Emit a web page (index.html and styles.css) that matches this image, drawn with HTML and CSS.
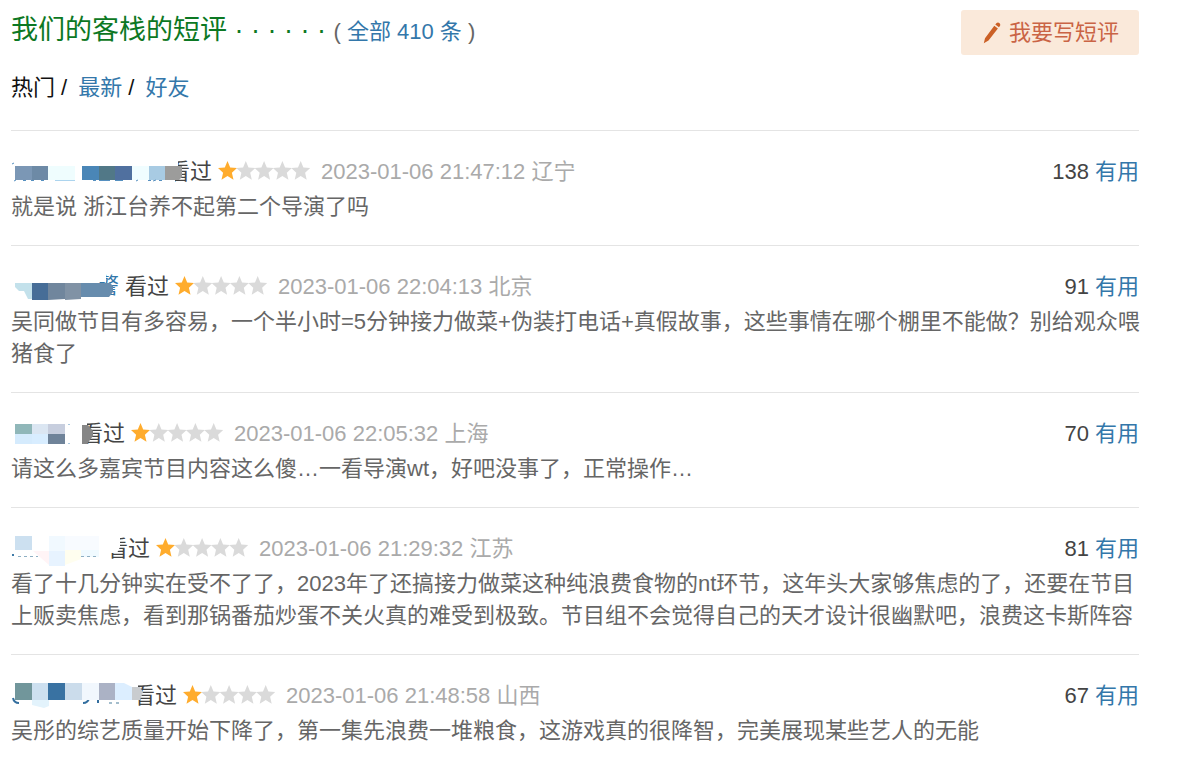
FILE: index.html
```html
<!DOCTYPE html>
<html lang="zh-CN">
<head>
<meta charset="utf-8">
<title>我们的客栈的短评</title>
<link rel="stylesheet" href="styles.css">
</head>
<body>
<svg class="defs" width="0" height="0" aria-hidden="true">
  <defs>
    <path id="star" d="M9.500 0L12.200 6.500L19 7.100L13.900 11.700L15.500 18.700L9.500 15.100L3.500 18.700L5.100 11.700L0 7.100L6.800 6.500Z"/>
    <g id="rating">
      <use href="#star" x="0" fill="#ffac2d"/>
      <g fill="#dadada"><use href="#star" x="18.300"/><use href="#star" x="36.600"/><use href="#star" x="54.900"/><use href="#star" x="73.200"/></g>
    </g>
  </defs>
</svg>
<main class="page">
  <header class="head">
    <h2 class="title">我们的客栈的短评 · · · · · · <span class="total">( <a href="#">全部 410 条</a> )</span></h2>
    <button class="write" type="button">
      <svg class="pencil" viewBox="0 0 18 22" width="18" height="22" aria-hidden="true"><path fill="#cb6026" d="M0.800 21.200L2 16.200L11.300 3.800L14.900 6.500L5.500 18.600ZM12.300 2.500L13.600 0.900Q15.200 0.100 16.600 1.200Q17.700 2.400 17.100 3.700L15.900 5.200Z"/></svg>
      <span>我要写短评</span>
    </button>
  </header>
  <nav class="tabs">
    <span class="tab">热门 /</span>
    <span class="tab"><a href="#">最新</a> /</span>
    <a class="tab" href="#">好友</a>
  </nav>

  <article class="comment">
    <div class="info">
      <span class="user user-a"><svg class="mask" width="180" height="34" aria-hidden="true">
        <path fill="#fff" d="M153 5h14v7h-14zM153 24h11v6h-11z"/>
        <path fill="#7b97b5" d="M4 11h17v14H4z"/><path fill="#6d8aa6" d="M21 11h16v14H21z"/><path fill="#effdfe" d="M37 11h27v14H37z"/>
        <path fill="#4a86b7" d="M71 11h17v14H71z"/><path fill="#517887" d="M88 11h16v14H88z"/><path fill="#50709f" d="M104 11h17v14h-17z"/>
        <path fill="#f0fdff" d="M121 11h17v14h-17z"/><path fill="#a8cbe3" d="M138 11h16v14h-16z"/><path fill="#9c9c9b" d="M154 11h17v11l-3 3h-14z"/>
        <path stroke="#5690c0" fill="none" d="M1 9l2-1M3 26l2-1M12 25.500h3M20 25.500h3M30 25.500h3M82 25.500h3M88 25.500h11M104 25.500h8M125 26l2-1M137 25.500h3M142 26l3-1M148 25.500h3"/><path stroke="#acd4ee" d="M44 25.500h20"/>
      </svg></span>
      <span class="seen">看过</span>
      <svg class="stars" width="93" height="19" role="img" aria-label="1星"><use href="#rating"/></svg>
      <span class="meta">2023-01-06 21:47:12 辽宁</span>
      <span class="vote">138 <a href="#">有用</a></span>
    </div>
    <p class="text">就是说 浙江台养不起第二个导演了吗</p>
  </article>

  <article class="comment">
    <div class="info">
      <span class="user user-b"><a class="name-end" href="#">警</a><svg class="mask" width="120" height="34" aria-hidden="true">
        <path fill="#fff" d="M82 3h13v9H82zM82 25h17v6H82z"/>
        <path fill="#c3e1eb" d="M4 13h17v16h-4l-4-8H8l-4-4z"/><path fill="#466d97" d="M21 13h16v17H21z"/><path fill="#70869d" d="M37 13h17v16l-17 1z"/>
        <path fill="#8092a5" d="M54 13h16v16l-16 1z"/><path fill="#678cad" d="M70 13h29l3 3v6l-4 5H70z"/>
      </svg></span>
      <span class="seen">看过</span>
      <svg class="stars" width="93" height="19" role="img" aria-label="1星"><use href="#rating"/></svg>
      <span class="meta">2023-01-06 22:04:13 北京</span>
      <span class="vote">91 <a href="#">有用</a></span>
    </div>
    <p class="text">吴同做节目有多容易，一个半小时=5分钟接力做菜+伪装打电话+真假故事，这些事情在哪个棚里不能做？别给观众喂猪食了</p>
  </article>

  <article class="comment">
    <div class="info">
      <span class="user user-c"><svg class="mask" width="90" height="34" aria-hidden="true">
        <path fill="#fff" d="M68 6h8v22h-8z"/>
        <path fill="#90b7b9" d="M4 7h17v10H4z"/><path fill="#dbe6f2" d="M21 7h16v10H21z"/><path fill="#c7cede" d="M37 7h17v10H37z"/>
        <path fill="#d5ebfd" d="M4 17h17v10H4z"/><path fill="#d8edff" d="M21 17h16v10H21z"/><path fill="#6f8399" d="M37 17h17v10H37z"/>
        <path fill="#868686" d="M71 8h6l5 6v5l-6 8h-5z"/><path fill="#a9c8df" d="M57 7h2v1h-2zM57 26h2v1h-2z"/>
      </svg></span>
      <span class="seen">看过</span>
      <svg class="stars" width="93" height="19" role="img" aria-label="1星"><use href="#rating"/></svg>
      <span class="meta">2023-01-06 22:05:32 上海</span>
      <span class="vote">70 <a href="#">有用</a></span>
    </div>
    <p class="text">请这么多嘉宾节目内容这么傻…一看导演wt，好吧没事了，正常操作…</p>
  </article>

  <article class="comment">
    <div class="info">
      <span class="user user-d"><svg class="mask" width="120" height="38" aria-hidden="true">
        <path fill="#fff" d="M94 4h15v11l-3 6h-6v7h-6z"/>
        <path fill="#cce0f0" d="M4 4h17v14H4z"/><path fill="#f1f9ff" d="M38 4h16v15H38z"/><path fill="#f8fbff" d="M54 4h34v14H54z"/>
        <path fill="#e7f3ff" d="M38 19h16v15H38z"/><path fill="#fff4f6" d="M22 19h16v14z"/><path fill="#fffeef" d="M54 18h16v9l-16 6z"/><path fill="#f0faff" d="M70 18h18v7H70z"/>
        <path stroke="#3f7ba8" stroke-width="2" d="M1 23h2"/><path stroke="#8eafc3" stroke-dasharray="3 3" d="M7 24.500h20M70 24.500h18"/>
      </svg></span>
      <span class="seen">看过</span>
      <svg class="stars" width="93" height="19" role="img" aria-label="1星"><use href="#rating"/></svg>
      <span class="meta">2023-01-06 21:29:32 江苏</span>
      <span class="vote">81 <a href="#">有用</a></span>
    </div>
    <p class="text">看了十几分钟实在受不了了，2023年了还搞接力做菜这种纯浪费食物的nt环节，这年头大家够焦虑的了，还要在节目上贩卖焦虑，看到那锅番茄炒蛋不关火真的难受到极致。节目组不会觉得自己的天才设计很幽默吧，浪费这卡斯阵容</p>
  </article>

  <article class="comment">
    <div class="info">
      <span class="user user-e"><svg class="mask" width="140" height="34" aria-hidden="true">
        <path fill="#fff" d="M122 4h5v24h-5z"/>
        <path fill="none" stroke="#346f9f" stroke-width="2" d="M2 19q1 5 6 5M72 24q5 0 6-5M87 21v3"/><path stroke="#a3bdcc" stroke-width="2" d="M98 24h3M105 24h3"/>
        <path fill="#71969b" d="M4 4h17v17H4z"/><path fill="#cde0f0" d="M21 4h16v17H21z"/><path fill="#3972a2" d="M37 4h17v17H37z"/><path fill="#cbdceb" d="M54 4h17v17H54z"/>
        <path fill="#f1f7fd" d="M71 4h17v17H71z"/><path fill="#abb2c5" d="M88 4h16v17H88z"/><path fill="#dceeff" d="M104 4h9l8 4v13h-17z"/><path fill="#c9cccf" d="M121 8h8l3 5-3 8h-8z"/><path fill="#e3f3fc" d="M21 21h17v6l-5 2-12-3z"/>
      </svg></span>
      <span class="seen">看过</span>
      <svg class="stars" width="93" height="19" role="img" aria-label="1星"><use href="#rating"/></svg>
      <span class="meta">2023-01-06 21:48:58 山西</span>
      <span class="vote">67 <a href="#">有用</a></span>
    </div>
    <p class="text">吴彤的综艺质量开始下降了，第一集先浪费一堆粮食，这游戏真的很降智，完美展现某些艺人的无能</p>
  </article>
</main>
</body>
</html>
```
FILE: styles.css
```css
body {
  margin: 0;
  background: #fff;
  color: #666;
  font: 22px/32px "Liberation Sans", "Noto Sans CJK SC", sans-serif;
}

a {
  color: #3377aa;
  text-decoration: none;
}

.defs {
  position: absolute;
}

.page {
  padding: 10px 61px 0 11px;
}

.head {
  display: flex;
  justify-content: space-between;
  align-items: flex-start;
}

.title {
  margin: 0;
  color: #0c7823;
  font-size: 27px;
  font-weight: 400;
  line-height: 40px;
}

.total {
  color: #666;
  font-size: 22px;
}

.write {
  display: flex;
  align-items: center;
  gap: 8px;
  height: 45px;
  padding: 0 20px 0 22px;
  border: 0;
  border-radius: 3px;
  background: #fae9da;
  color: #ca6445;
  font: inherit;
}

.tabs {
  display: flex;
  gap: 11px;
  margin: 17px 0 26px;
  color: #111;
}

.comment {
  padding: 24px 0 22px;
  border-top: 1px solid #e4e4e4;
}

.info {
  display: flex;
  align-items: center;
  height: 34px;
}

.user {
  position: relative;
  flex: none;
  height: 34px;
  text-align: right;
}

.user-a { width: 157px; }
.user-b { width: 114px; }
.user-c { width: 70px; }
.user-d { width: 95px; }
.user-e { width: 122px; }

.name-end {
  padding-right: 6px;
}

.mask {
  position: absolute;
  top: 0;
  left: 0;
}

.seen {
  color: #444;
}

.stars {
  flex: none;
  margin: 0 10px 4px 6px;
}

.meta {
  color: #aaa;
}

.vote {
  margin-left: auto;
  color: #444;
}

.text {
  margin: 2px -12px 0 0;
}
```
